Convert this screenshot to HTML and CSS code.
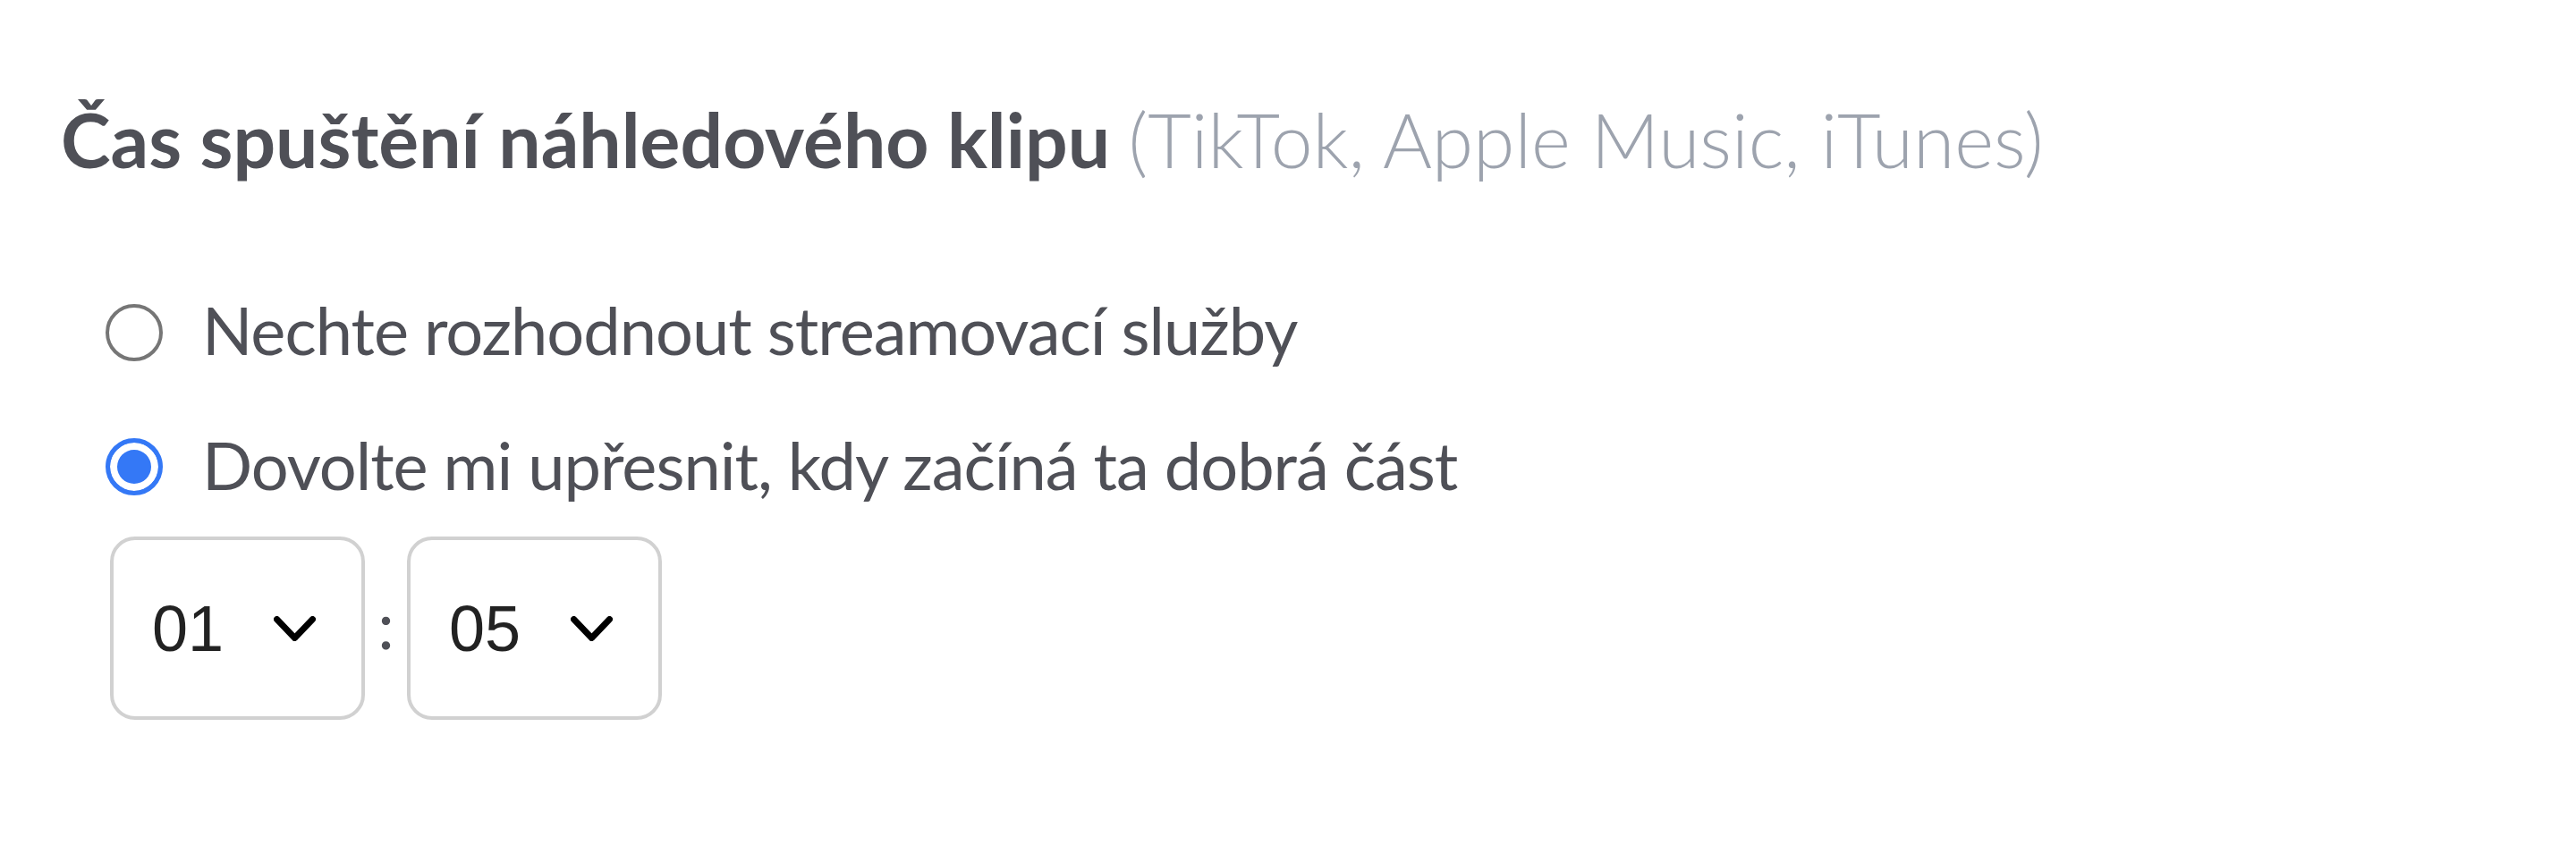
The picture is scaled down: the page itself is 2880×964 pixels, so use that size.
FILE: index.html
```html
<!DOCTYPE html>
<html lang="cs">
<head>
<meta charset="UTF-8">
<meta name="viewport" content="width=device-width, initial-scale=1.0">
<title>Čas spuštění náhledového klipu</title>
<link rel="stylesheet" href="styles.css">
</head>
<body>

<section class="preview-start">
    <h2 class="field-title">Čas spuštění náhledového klipu <span class="field-note">(TikTok, Apple Music, iTunes)</span></h2>

    <div class="options">
        <label class="option">
            <input type="radio" name="preview" value="auto">
            <span>Nechte rozhodnout streamovací služby</span>
        </label>
        <label class="option">
            <input type="radio" name="preview" value="custom" checked>
            <span>Dovolte mi upřesnit, kdy začíná ta dobrá část</span>
        </label>

        <!-- minuty : sekundy -->
        <div class="time-picker">
            <div class="time-select">
                <span class="time-value">01</span>
                <svg class="chevron" width="47" height="28" viewBox="0 0 47 28"><polyline points="3.5,3.5 23.5,24.5 43.5,3.5" /></svg>
            </div>
            <span class="time-sep">:</span>
            <div class="time-select">
                <span class="time-value">05</span>
                <svg class="chevron" width="47" height="28" viewBox="0 0 47 28"><polyline points="3.5,3.5 23.5,24.5 43.5,3.5" /></svg>
            </div>
        </div>
    </div>
</section>

</body>
</html>
```

FILE: styles.css
```css
body {
    margin: 0;
    background-color: #fff;
    font-family: Lato, "Noto Sans", sans-serif;
    color: #4f5057;
}

.preview-start {
    padding: 106px 0 0 68px;
}

.field-title {
    margin: 0;
    font-size: 84px;
    font-weight: 700;
    line-height: 1.2;
}

.field-note {
    font-weight: 300;
    color: #9da3ae;
}

.options {
    margin-top: 118px;
    padding-left: 50px;
    display: flex;
    flex-direction: column;
    align-items: flex-start;
}

.option {
    display: flex;
    align-items: center;
    gap: 44px;
    font-size: 74px;
    letter-spacing: -1px;
    line-height: 1.2;
    cursor: pointer;
}

.option + .option {
    margin-top: 62px;
}

.option input {
    appearance: none;
    width: 64px;
    height: 64px;
    margin: 5px 0 0;
    border: 4px solid #767676;
    border-radius: 50%;
    background-color: #fff;
    flex-shrink: 0;
}

.option input:checked {
    border: 5px solid #3478f6;
    background-color: #3478f6;
    box-shadow: inset 0 0 0 8px #fff;
}

.time-picker {
    margin-top: 36px;
    margin-left: 5px;
    display: flex;
    align-items: center;
}

.time-select {
    width: 285px;
    height: 205px;
    box-sizing: border-box;
    padding: 0 51px 0 43px;
    border: 4px solid #d1d1d1;
    border-radius: 28px;
    display: flex;
    align-items: center;
    justify-content: space-between;
}

.time-value {
    font-family: "Liberation Sans", Arial, sans-serif;
    font-size: 72px;
    color: #222;
}

.chevron {
    fill: none;
    stroke: #000;
    stroke-width: 7;
    stroke-linecap: round;
    stroke-linejoin: round;
}

.time-sep {
    width: 47px;
    text-align: center;
    font-size: 74px;
    line-height: 1.2;
    margin-bottom: 8px;
}
```
